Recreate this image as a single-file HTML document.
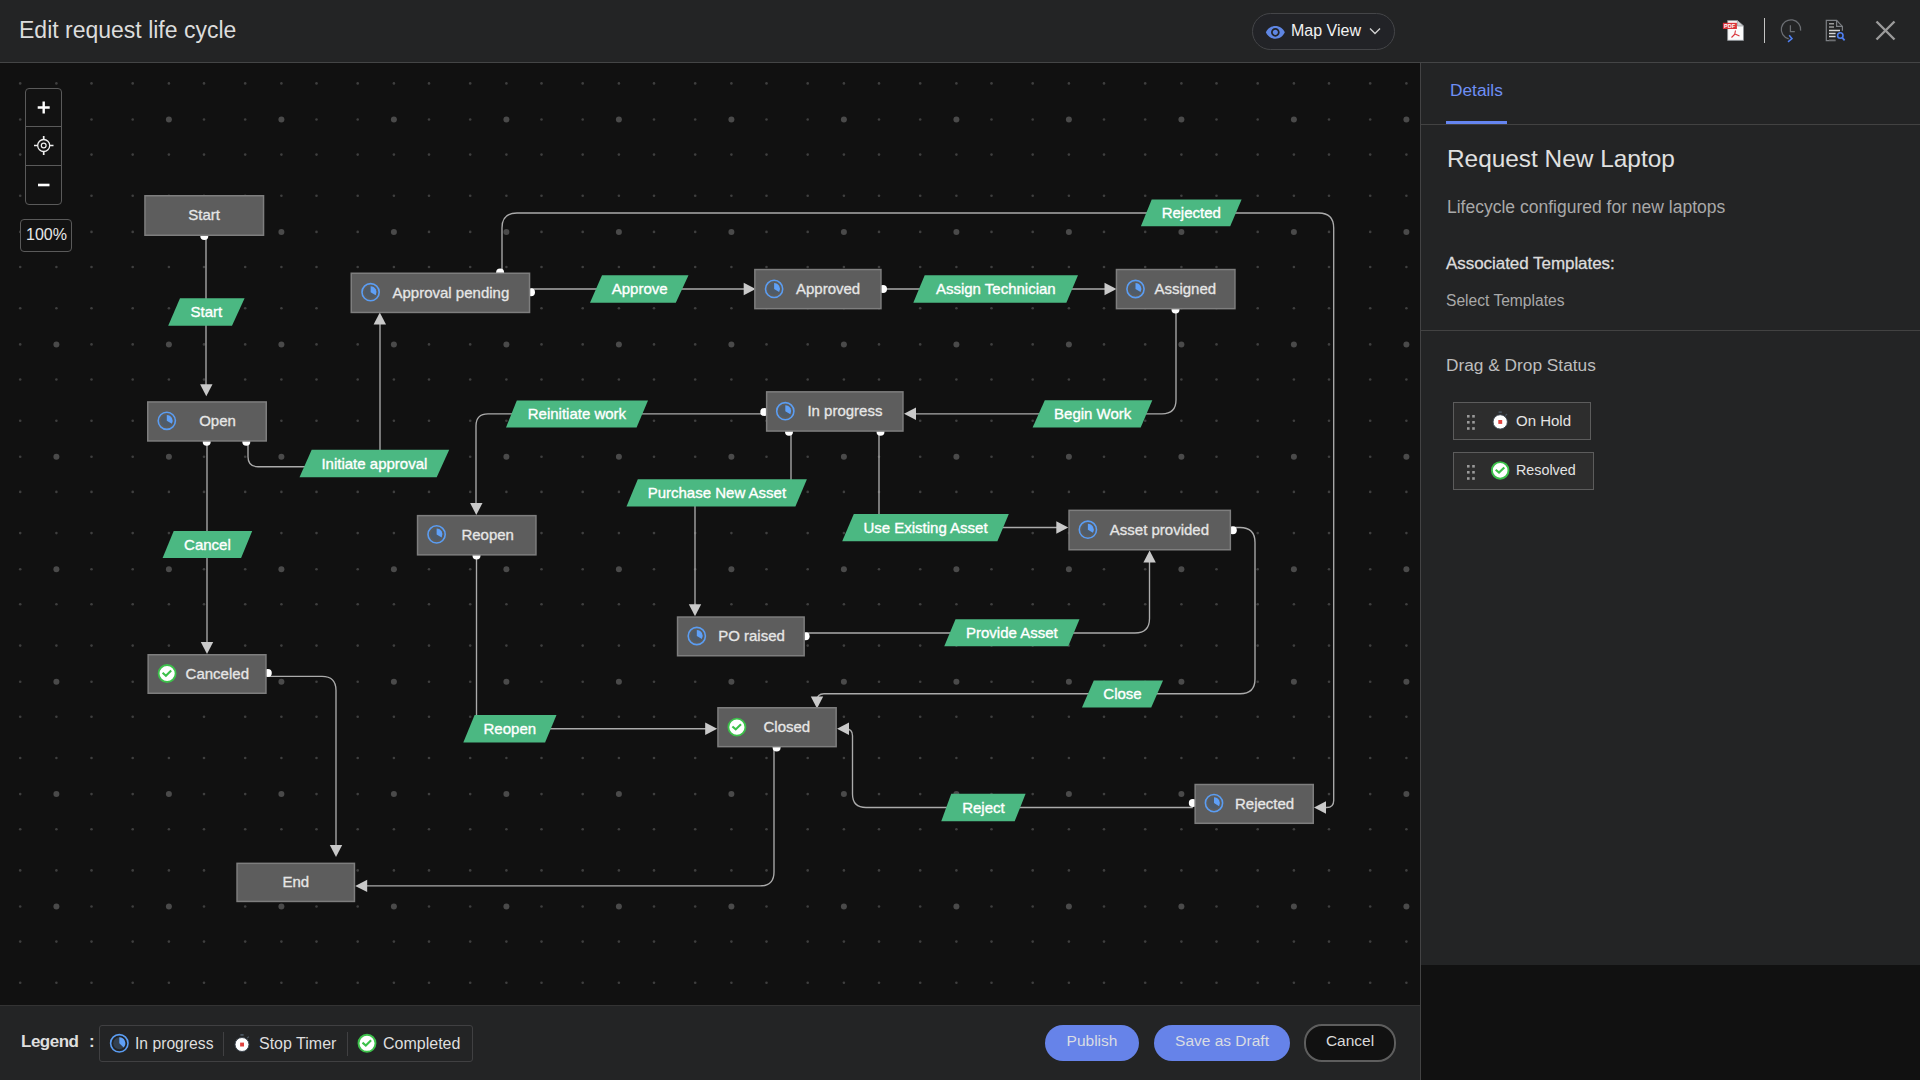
<!DOCTYPE html>
<html><head><meta charset="utf-8"><title>Edit request life cycle</title>
<style>
*{box-sizing:border-box}
html,body{margin:0;padding:0;width:1920px;height:1080px;overflow:hidden;background:#121212;font-family:"Liberation Sans",sans-serif}
.abs{position:absolute}
#hdr{left:0;top:0;width:1920px;height:63px;background:#232425;border-bottom:1px solid #444546}
#title{left:19px;top:15.2px;font-size:23px;color:#dcdcdc;line-height:30px;white-space:nowrap}
#mapview{left:1252px;top:13px;width:143px;height:37px;border:1px solid #444548;border-radius:19px;background:#222327}
#mvtext{left:1291px;top:21px;font-size:16px;color:#f2f2f2;line-height:20px;white-space:nowrap}
#canvas{left:0;top:63px;width:1420px;height:942px;background:#111111;overflow:hidden}
#panel{left:1420px;top:63px;width:500px;height:902px;background:#232425;border-left:1px solid #434344}
#below{left:1420px;top:965px;width:500px;height:115px;background:#111111;border-left:1px solid #434343}
#bottom{left:0;top:1005px;width:1420px;height:75px;background:#232425;border-top:1px solid #333333}
.t{position:absolute;white-space:nowrap;line-height:1}
.nt{font-family:"Liberation Sans",sans-serif;font-size:15px;fill:#e6e6e6;stroke:#e6e6e6;stroke-width:0.3px}
.lt{font-family:"Liberation Sans",sans-serif;font-size:15px;fill:#ffffff;stroke:#ffffff;stroke-width:0.35px}
.btn{position:absolute;border-radius:18px;height:36px;top:1025px;background:#6683e9;color:#d9dce3;font-size:15.5px;line-height:32.5px;text-align:center;white-space:nowrap}
</style></head>
<body>

<div id="hdr" class="abs"></div>
<div id="title" class="abs">Edit request life cycle</div>
<div id="mapview" class="abs"></div>
<svg class="abs" style="left:1265.1px;top:21.6px" width="20.7" height="20.7" viewBox="0 0 24 24">
 <path d="M12 4.5C7 4.5 2.73 7.61 1 12c1.73 4.39 6 7.5 11 7.5s9.27-3.11 11-7.5c-1.73-4.39-6-7.5-11-7.5zM12 17c-2.76 0-5-2.24-5-5s2.240-5 5-5 5 2.24 5 5-2.24 5-5 5zm0-8c-1.66 0-3 1.34-3 3s1.34 3 3 3 3-1.34 3-3-1.34-3-3-3z" fill="#5f86e3"/>
</svg>
<div id="mvtext" class="abs">Map View</div>
<svg class="abs" style="left:1368px;top:26px" width="14" height="10" viewBox="0 0 14 10"><path d="M2,2.5 L7,7.5 L12,2.5" fill="none" stroke="#d0d0d0" stroke-width="1.4"/></svg>
<svg class="abs" style="left:1718px;top:15px" width="32" height="30" viewBox="0 0 32 30">
 <path d="M9.6,5.6 H19.4 L25.5,11 V25.4 H9.6 Z" fill="#fafafa" stroke="#8a8d92" stroke-width="0.9"/>
 <path d="M19.4,5.6 V11 H25.5 Z" fill="#d0d2d4" stroke="#8a8d92" stroke-width="0.6"/>
 <rect x="4.9" y="7.8" width="14" height="6.2" fill="#d9343a"/>
 <text x="6" y="13" font-size="5.5" font-family="Liberation Sans" font-weight="bold" fill="#fff">PDF</text>
 <path d="M17.5,15.5 L16.5,20 M17,19 L13.5,22.5 M17,19 L21.5,21" stroke="#d9343a" stroke-width="1.1" fill="none"/>
</svg>
<div class="abs" style="left:1764px;top:18px;width:1px;height:25px;background:#c4c4c4"></div>
<svg class="abs" style="left:1760px;top:0px" width="100" height="60" viewBox="1760 0 100 60">
 <path d="M1800.6,30.6 A9.7,9.7 0 1 0 1788.7,38.9" fill="none" stroke="#6b6e73" stroke-width="1.25"/>
 <path d="M1790.4,25.3 V31.7 H1794.8" fill="none" stroke="#6b6e73" stroke-width="1.25"/>
 <path d="M1789.2,35.3 L1792,38.7 L1788,41.9" fill="none" stroke="#4f7ff0" stroke-width="1.5"/>
 <path d="M1835.6,40.6 H1826.3 V20.3 H1836.6 L1842.4,26.4 V30.8" fill="none" stroke="#7d8085" stroke-width="1.2"/>
 <path d="M1836.6,20.3 V26.3 H1842.4" fill="none" stroke="#7d8085" stroke-width="1.2"/>
 <path d="M1829,23.8 H1834 M1829,27.1 H1834" stroke="#9a9a9a" stroke-width="1.5"/>
 <path d="M1829,30.4 H1840 M1829,33.4 H1835.6 M1829,36.5 H1835.6" stroke="#d6d6d6" stroke-width="1.5"/>
 <path d="M1829,39.8 H1835.6" stroke="#555" stroke-width="1.2"/>
 <circle cx="1840.3" cy="35.5" r="2.7" fill="none" stroke="#4f7ff0" stroke-width="1.6"/>
 <path d="M1842.2,37.6 L1844.6,40.3" stroke="#4f7ff0" stroke-width="1.8"/>
</svg>
<svg class="abs" style="left:1872px;top:17px" width="28" height="28" viewBox="0 0 28 28"><path d="M4.5,4.5 L22.5,22.5 M22.5,4.5 L4.5,22.5" stroke="#9b9b9b" stroke-width="2.4"/></svg>


<div id="canvas" class="abs"></div>
<svg class="abs" style="left:0;top:0" width="1420" height="1005" viewBox="0 0 1420 1005">
<g clip-path="url(#cc)"><clipPath id="cc"><rect x="0" y="63" width="1420" height="942"/></clipPath>
<g fill="#3f3f3f"><circle cx="20.2" cy="83.4" r="1.3"/><circle cx="20.2" cy="119.5" r="1.3"/><circle cx="20.2" cy="154.6" r="1.3"/><circle cx="20.2" cy="195.8" r="1.3"/><circle cx="20.2" cy="231.9" r="1.3"/><circle cx="20.2" cy="267.0" r="1.3"/><circle cx="20.2" cy="308.3" r="1.3"/><circle cx="20.2" cy="344.4" r="1.3"/><circle cx="20.2" cy="379.5" r="1.3"/><circle cx="20.2" cy="420.7" r="1.3"/><circle cx="20.2" cy="456.8" r="1.3"/><circle cx="20.2" cy="491.9" r="1.3"/><circle cx="20.2" cy="533.1" r="1.3"/><circle cx="20.2" cy="569.2" r="1.3"/><circle cx="20.2" cy="604.3" r="1.3"/><circle cx="20.2" cy="645.6" r="1.3"/><circle cx="20.2" cy="681.7" r="1.3"/><circle cx="20.2" cy="716.8" r="1.3"/><circle cx="20.2" cy="758.0" r="1.3"/><circle cx="20.2" cy="794.1" r="1.3"/><circle cx="20.2" cy="829.2" r="1.3"/><circle cx="20.2" cy="870.4" r="1.3"/><circle cx="20.2" cy="906.5" r="1.3"/><circle cx="20.2" cy="941.6" r="1.3"/><circle cx="20.2" cy="982.8" r="1.3"/><circle cx="56.4" cy="83.4" r="1.3"/><circle cx="56.4" cy="154.6" r="1.3"/><circle cx="56.4" cy="195.8" r="1.3"/><circle cx="56.4" cy="267.0" r="1.3"/><circle cx="56.4" cy="308.3" r="1.3"/><circle cx="56.4" cy="379.5" r="1.3"/><circle cx="56.4" cy="420.7" r="1.3"/><circle cx="56.4" cy="491.9" r="1.3"/><circle cx="56.4" cy="533.1" r="1.3"/><circle cx="56.4" cy="604.3" r="1.3"/><circle cx="56.4" cy="645.6" r="1.3"/><circle cx="56.4" cy="716.8" r="1.3"/><circle cx="56.4" cy="758.0" r="1.3"/><circle cx="56.4" cy="829.2" r="1.3"/><circle cx="56.4" cy="870.4" r="1.3"/><circle cx="56.4" cy="941.6" r="1.3"/><circle cx="56.4" cy="982.8" r="1.3"/><circle cx="91.5" cy="83.4" r="1.3"/><circle cx="91.5" cy="119.5" r="1.3"/><circle cx="91.5" cy="154.6" r="1.3"/><circle cx="91.5" cy="195.8" r="1.3"/><circle cx="91.5" cy="231.9" r="1.3"/><circle cx="91.5" cy="267.0" r="1.3"/><circle cx="91.5" cy="308.3" r="1.3"/><circle cx="91.5" cy="344.4" r="1.3"/><circle cx="91.5" cy="379.5" r="1.3"/><circle cx="91.5" cy="420.7" r="1.3"/><circle cx="91.5" cy="456.8" r="1.3"/><circle cx="91.5" cy="491.9" r="1.3"/><circle cx="91.5" cy="533.1" r="1.3"/><circle cx="91.5" cy="569.2" r="1.3"/><circle cx="91.5" cy="604.3" r="1.3"/><circle cx="91.5" cy="645.6" r="1.3"/><circle cx="91.5" cy="681.7" r="1.3"/><circle cx="91.5" cy="716.8" r="1.3"/><circle cx="91.5" cy="758.0" r="1.3"/><circle cx="91.5" cy="794.1" r="1.3"/><circle cx="91.5" cy="829.2" r="1.3"/><circle cx="91.5" cy="870.4" r="1.3"/><circle cx="91.5" cy="906.5" r="1.3"/><circle cx="91.5" cy="941.6" r="1.3"/><circle cx="91.5" cy="982.8" r="1.3"/><circle cx="132.7" cy="83.4" r="1.3"/><circle cx="132.7" cy="119.5" r="1.3"/><circle cx="132.7" cy="154.6" r="1.3"/><circle cx="132.7" cy="195.8" r="1.3"/><circle cx="132.7" cy="231.9" r="1.3"/><circle cx="132.7" cy="267.0" r="1.3"/><circle cx="132.7" cy="308.3" r="1.3"/><circle cx="132.7" cy="344.4" r="1.3"/><circle cx="132.7" cy="379.5" r="1.3"/><circle cx="132.7" cy="420.7" r="1.3"/><circle cx="132.7" cy="456.8" r="1.3"/><circle cx="132.7" cy="491.9" r="1.3"/><circle cx="132.7" cy="533.1" r="1.3"/><circle cx="132.7" cy="569.2" r="1.3"/><circle cx="132.7" cy="604.3" r="1.3"/><circle cx="132.7" cy="645.6" r="1.3"/><circle cx="132.7" cy="681.7" r="1.3"/><circle cx="132.7" cy="716.8" r="1.3"/><circle cx="132.7" cy="758.0" r="1.3"/><circle cx="132.7" cy="794.1" r="1.3"/><circle cx="132.7" cy="829.2" r="1.3"/><circle cx="132.7" cy="870.4" r="1.3"/><circle cx="132.7" cy="906.5" r="1.3"/><circle cx="132.7" cy="941.6" r="1.3"/><circle cx="132.7" cy="982.8" r="1.3"/><circle cx="168.9" cy="83.4" r="1.3"/><circle cx="168.9" cy="154.6" r="1.3"/><circle cx="168.9" cy="195.8" r="1.3"/><circle cx="168.9" cy="267.0" r="1.3"/><circle cx="168.9" cy="308.3" r="1.3"/><circle cx="168.9" cy="379.5" r="1.3"/><circle cx="168.9" cy="420.7" r="1.3"/><circle cx="168.9" cy="491.9" r="1.3"/><circle cx="168.9" cy="533.1" r="1.3"/><circle cx="168.9" cy="604.3" r="1.3"/><circle cx="168.9" cy="645.6" r="1.3"/><circle cx="168.9" cy="716.8" r="1.3"/><circle cx="168.9" cy="758.0" r="1.3"/><circle cx="168.9" cy="829.2" r="1.3"/><circle cx="168.9" cy="870.4" r="1.3"/><circle cx="168.9" cy="941.6" r="1.3"/><circle cx="168.9" cy="982.8" r="1.3"/><circle cx="204.0" cy="83.4" r="1.3"/><circle cx="204.0" cy="119.5" r="1.3"/><circle cx="204.0" cy="154.6" r="1.3"/><circle cx="204.0" cy="195.8" r="1.3"/><circle cx="204.0" cy="231.9" r="1.3"/><circle cx="204.0" cy="267.0" r="1.3"/><circle cx="204.0" cy="308.3" r="1.3"/><circle cx="204.0" cy="344.4" r="1.3"/><circle cx="204.0" cy="379.5" r="1.3"/><circle cx="204.0" cy="420.7" r="1.3"/><circle cx="204.0" cy="456.8" r="1.3"/><circle cx="204.0" cy="491.9" r="1.3"/><circle cx="204.0" cy="533.1" r="1.3"/><circle cx="204.0" cy="569.2" r="1.3"/><circle cx="204.0" cy="604.3" r="1.3"/><circle cx="204.0" cy="645.6" r="1.3"/><circle cx="204.0" cy="681.7" r="1.3"/><circle cx="204.0" cy="716.8" r="1.3"/><circle cx="204.0" cy="758.0" r="1.3"/><circle cx="204.0" cy="794.1" r="1.3"/><circle cx="204.0" cy="829.2" r="1.3"/><circle cx="204.0" cy="870.4" r="1.3"/><circle cx="204.0" cy="906.5" r="1.3"/><circle cx="204.0" cy="941.6" r="1.3"/><circle cx="204.0" cy="982.8" r="1.3"/><circle cx="245.2" cy="83.4" r="1.3"/><circle cx="245.2" cy="119.5" r="1.3"/><circle cx="245.2" cy="154.6" r="1.3"/><circle cx="245.2" cy="195.8" r="1.3"/><circle cx="245.2" cy="231.9" r="1.3"/><circle cx="245.2" cy="267.0" r="1.3"/><circle cx="245.2" cy="308.3" r="1.3"/><circle cx="245.2" cy="344.4" r="1.3"/><circle cx="245.2" cy="379.5" r="1.3"/><circle cx="245.2" cy="420.7" r="1.3"/><circle cx="245.2" cy="456.8" r="1.3"/><circle cx="245.2" cy="491.9" r="1.3"/><circle cx="245.2" cy="533.1" r="1.3"/><circle cx="245.2" cy="569.2" r="1.3"/><circle cx="245.2" cy="604.3" r="1.3"/><circle cx="245.2" cy="645.6" r="1.3"/><circle cx="245.2" cy="681.7" r="1.3"/><circle cx="245.2" cy="716.8" r="1.3"/><circle cx="245.2" cy="758.0" r="1.3"/><circle cx="245.2" cy="794.1" r="1.3"/><circle cx="245.2" cy="829.2" r="1.3"/><circle cx="245.2" cy="870.4" r="1.3"/><circle cx="245.2" cy="906.5" r="1.3"/><circle cx="245.2" cy="941.6" r="1.3"/><circle cx="245.2" cy="982.8" r="1.3"/><circle cx="281.4" cy="83.4" r="1.3"/><circle cx="281.4" cy="154.6" r="1.3"/><circle cx="281.4" cy="195.8" r="1.3"/><circle cx="281.4" cy="267.0" r="1.3"/><circle cx="281.4" cy="308.3" r="1.3"/><circle cx="281.4" cy="379.5" r="1.3"/><circle cx="281.4" cy="420.7" r="1.3"/><circle cx="281.4" cy="491.9" r="1.3"/><circle cx="281.4" cy="533.1" r="1.3"/><circle cx="281.4" cy="604.3" r="1.3"/><circle cx="281.4" cy="645.6" r="1.3"/><circle cx="281.4" cy="716.8" r="1.3"/><circle cx="281.4" cy="758.0" r="1.3"/><circle cx="281.4" cy="829.2" r="1.3"/><circle cx="281.4" cy="870.4" r="1.3"/><circle cx="281.4" cy="941.6" r="1.3"/><circle cx="281.4" cy="982.8" r="1.3"/><circle cx="316.5" cy="83.4" r="1.3"/><circle cx="316.5" cy="119.5" r="1.3"/><circle cx="316.5" cy="154.6" r="1.3"/><circle cx="316.5" cy="195.8" r="1.3"/><circle cx="316.5" cy="231.9" r="1.3"/><circle cx="316.5" cy="267.0" r="1.3"/><circle cx="316.5" cy="308.3" r="1.3"/><circle cx="316.5" cy="344.4" r="1.3"/><circle cx="316.5" cy="379.5" r="1.3"/><circle cx="316.5" cy="420.7" r="1.3"/><circle cx="316.5" cy="456.8" r="1.3"/><circle cx="316.5" cy="491.9" r="1.3"/><circle cx="316.5" cy="533.1" r="1.3"/><circle cx="316.5" cy="569.2" r="1.3"/><circle cx="316.5" cy="604.3" r="1.3"/><circle cx="316.5" cy="645.6" r="1.3"/><circle cx="316.5" cy="681.7" r="1.3"/><circle cx="316.5" cy="716.8" r="1.3"/><circle cx="316.5" cy="758.0" r="1.3"/><circle cx="316.5" cy="794.1" r="1.3"/><circle cx="316.5" cy="829.2" r="1.3"/><circle cx="316.5" cy="870.4" r="1.3"/><circle cx="316.5" cy="906.5" r="1.3"/><circle cx="316.5" cy="941.6" r="1.3"/><circle cx="316.5" cy="982.8" r="1.3"/><circle cx="357.7" cy="83.4" r="1.3"/><circle cx="357.7" cy="119.5" r="1.3"/><circle cx="357.7" cy="154.6" r="1.3"/><circle cx="357.7" cy="195.8" r="1.3"/><circle cx="357.7" cy="231.9" r="1.3"/><circle cx="357.7" cy="267.0" r="1.3"/><circle cx="357.7" cy="308.3" r="1.3"/><circle cx="357.7" cy="344.4" r="1.3"/><circle cx="357.7" cy="379.5" r="1.3"/><circle cx="357.7" cy="420.7" r="1.3"/><circle cx="357.7" cy="456.8" r="1.3"/><circle cx="357.7" cy="491.9" r="1.3"/><circle cx="357.7" cy="533.1" r="1.3"/><circle cx="357.7" cy="569.2" r="1.3"/><circle cx="357.7" cy="604.3" r="1.3"/><circle cx="357.7" cy="645.6" r="1.3"/><circle cx="357.7" cy="681.7" r="1.3"/><circle cx="357.7" cy="716.8" r="1.3"/><circle cx="357.7" cy="758.0" r="1.3"/><circle cx="357.7" cy="794.1" r="1.3"/><circle cx="357.7" cy="829.2" r="1.3"/><circle cx="357.7" cy="870.4" r="1.3"/><circle cx="357.7" cy="906.5" r="1.3"/><circle cx="357.7" cy="941.6" r="1.3"/><circle cx="357.7" cy="982.8" r="1.3"/><circle cx="393.9" cy="83.4" r="1.3"/><circle cx="393.9" cy="154.6" r="1.3"/><circle cx="393.9" cy="195.8" r="1.3"/><circle cx="393.9" cy="267.0" r="1.3"/><circle cx="393.9" cy="308.3" r="1.3"/><circle cx="393.9" cy="379.5" r="1.3"/><circle cx="393.9" cy="420.7" r="1.3"/><circle cx="393.9" cy="491.9" r="1.3"/><circle cx="393.9" cy="533.1" r="1.3"/><circle cx="393.9" cy="604.3" r="1.3"/><circle cx="393.9" cy="645.6" r="1.3"/><circle cx="393.9" cy="716.8" r="1.3"/><circle cx="393.9" cy="758.0" r="1.3"/><circle cx="393.9" cy="829.2" r="1.3"/><circle cx="393.9" cy="870.4" r="1.3"/><circle cx="393.9" cy="941.6" r="1.3"/><circle cx="393.9" cy="982.8" r="1.3"/><circle cx="429.0" cy="83.4" r="1.3"/><circle cx="429.0" cy="119.5" r="1.3"/><circle cx="429.0" cy="154.6" r="1.3"/><circle cx="429.0" cy="195.8" r="1.3"/><circle cx="429.0" cy="231.9" r="1.3"/><circle cx="429.0" cy="267.0" r="1.3"/><circle cx="429.0" cy="308.3" r="1.3"/><circle cx="429.0" cy="344.4" r="1.3"/><circle cx="429.0" cy="379.5" r="1.3"/><circle cx="429.0" cy="420.7" r="1.3"/><circle cx="429.0" cy="456.8" r="1.3"/><circle cx="429.0" cy="491.9" r="1.3"/><circle cx="429.0" cy="533.1" r="1.3"/><circle cx="429.0" cy="569.2" r="1.3"/><circle cx="429.0" cy="604.3" r="1.3"/><circle cx="429.0" cy="645.6" r="1.3"/><circle cx="429.0" cy="681.7" r="1.3"/><circle cx="429.0" cy="716.8" r="1.3"/><circle cx="429.0" cy="758.0" r="1.3"/><circle cx="429.0" cy="794.1" r="1.3"/><circle cx="429.0" cy="829.2" r="1.3"/><circle cx="429.0" cy="870.4" r="1.3"/><circle cx="429.0" cy="906.5" r="1.3"/><circle cx="429.0" cy="941.6" r="1.3"/><circle cx="429.0" cy="982.8" r="1.3"/><circle cx="470.2" cy="83.4" r="1.3"/><circle cx="470.2" cy="119.5" r="1.3"/><circle cx="470.2" cy="154.6" r="1.3"/><circle cx="470.2" cy="195.8" r="1.3"/><circle cx="470.2" cy="231.9" r="1.3"/><circle cx="470.2" cy="267.0" r="1.3"/><circle cx="470.2" cy="308.3" r="1.3"/><circle cx="470.2" cy="344.4" r="1.3"/><circle cx="470.2" cy="379.5" r="1.3"/><circle cx="470.2" cy="420.7" r="1.3"/><circle cx="470.2" cy="456.8" r="1.3"/><circle cx="470.2" cy="491.9" r="1.3"/><circle cx="470.2" cy="533.1" r="1.3"/><circle cx="470.2" cy="569.2" r="1.3"/><circle cx="470.2" cy="604.3" r="1.3"/><circle cx="470.2" cy="645.6" r="1.3"/><circle cx="470.2" cy="681.7" r="1.3"/><circle cx="470.2" cy="716.8" r="1.3"/><circle cx="470.2" cy="758.0" r="1.3"/><circle cx="470.2" cy="794.1" r="1.3"/><circle cx="470.2" cy="829.2" r="1.3"/><circle cx="470.2" cy="870.4" r="1.3"/><circle cx="470.2" cy="906.5" r="1.3"/><circle cx="470.2" cy="941.6" r="1.3"/><circle cx="470.2" cy="982.8" r="1.3"/><circle cx="506.4" cy="83.4" r="1.3"/><circle cx="506.4" cy="154.6" r="1.3"/><circle cx="506.4" cy="195.8" r="1.3"/><circle cx="506.4" cy="267.0" r="1.3"/><circle cx="506.4" cy="308.3" r="1.3"/><circle cx="506.4" cy="379.5" r="1.3"/><circle cx="506.4" cy="420.7" r="1.3"/><circle cx="506.4" cy="491.9" r="1.3"/><circle cx="506.4" cy="533.1" r="1.3"/><circle cx="506.4" cy="604.3" r="1.3"/><circle cx="506.4" cy="645.6" r="1.3"/><circle cx="506.4" cy="716.8" r="1.3"/><circle cx="506.4" cy="758.0" r="1.3"/><circle cx="506.4" cy="829.2" r="1.3"/><circle cx="506.4" cy="870.4" r="1.3"/><circle cx="506.4" cy="941.6" r="1.3"/><circle cx="506.4" cy="982.8" r="1.3"/><circle cx="541.5" cy="83.4" r="1.3"/><circle cx="541.5" cy="119.5" r="1.3"/><circle cx="541.5" cy="154.6" r="1.3"/><circle cx="541.5" cy="195.8" r="1.3"/><circle cx="541.5" cy="231.9" r="1.3"/><circle cx="541.5" cy="267.0" r="1.3"/><circle cx="541.5" cy="308.3" r="1.3"/><circle cx="541.5" cy="344.4" r="1.3"/><circle cx="541.5" cy="379.5" r="1.3"/><circle cx="541.5" cy="420.7" r="1.3"/><circle cx="541.5" cy="456.8" r="1.3"/><circle cx="541.5" cy="491.9" r="1.3"/><circle cx="541.5" cy="533.1" r="1.3"/><circle cx="541.5" cy="569.2" r="1.3"/><circle cx="541.5" cy="604.3" r="1.3"/><circle cx="541.5" cy="645.6" r="1.3"/><circle cx="541.5" cy="681.7" r="1.3"/><circle cx="541.5" cy="716.8" r="1.3"/><circle cx="541.5" cy="758.0" r="1.3"/><circle cx="541.5" cy="794.1" r="1.3"/><circle cx="541.5" cy="829.2" r="1.3"/><circle cx="541.5" cy="870.4" r="1.3"/><circle cx="541.5" cy="906.5" r="1.3"/><circle cx="541.5" cy="941.6" r="1.3"/><circle cx="541.5" cy="982.8" r="1.3"/><circle cx="582.7" cy="83.4" r="1.3"/><circle cx="582.7" cy="119.5" r="1.3"/><circle cx="582.7" cy="154.6" r="1.3"/><circle cx="582.7" cy="195.8" r="1.3"/><circle cx="582.7" cy="231.9" r="1.3"/><circle cx="582.7" cy="267.0" r="1.3"/><circle cx="582.7" cy="308.3" r="1.3"/><circle cx="582.7" cy="344.4" r="1.3"/><circle cx="582.7" cy="379.5" r="1.3"/><circle cx="582.7" cy="420.7" r="1.3"/><circle cx="582.7" cy="456.8" r="1.3"/><circle cx="582.7" cy="491.9" r="1.3"/><circle cx="582.7" cy="533.1" r="1.3"/><circle cx="582.7" cy="569.2" r="1.3"/><circle cx="582.7" cy="604.3" r="1.3"/><circle cx="582.7" cy="645.6" r="1.3"/><circle cx="582.7" cy="681.7" r="1.3"/><circle cx="582.7" cy="716.8" r="1.3"/><circle cx="582.7" cy="758.0" r="1.3"/><circle cx="582.7" cy="794.1" r="1.3"/><circle cx="582.7" cy="829.2" r="1.3"/><circle cx="582.7" cy="870.4" r="1.3"/><circle cx="582.7" cy="906.5" r="1.3"/><circle cx="582.7" cy="941.6" r="1.3"/><circle cx="582.7" cy="982.8" r="1.3"/><circle cx="618.9" cy="83.4" r="1.3"/><circle cx="618.9" cy="154.6" r="1.3"/><circle cx="618.9" cy="195.8" r="1.3"/><circle cx="618.9" cy="267.0" r="1.3"/><circle cx="618.9" cy="308.3" r="1.3"/><circle cx="618.9" cy="379.5" r="1.3"/><circle cx="618.9" cy="420.7" r="1.3"/><circle cx="618.9" cy="491.9" r="1.3"/><circle cx="618.9" cy="533.1" r="1.3"/><circle cx="618.9" cy="604.3" r="1.3"/><circle cx="618.9" cy="645.6" r="1.3"/><circle cx="618.9" cy="716.8" r="1.3"/><circle cx="618.9" cy="758.0" r="1.3"/><circle cx="618.9" cy="829.2" r="1.3"/><circle cx="618.9" cy="870.4" r="1.3"/><circle cx="618.9" cy="941.6" r="1.3"/><circle cx="618.9" cy="982.8" r="1.3"/><circle cx="654.0" cy="83.4" r="1.3"/><circle cx="654.0" cy="119.5" r="1.3"/><circle cx="654.0" cy="154.6" r="1.3"/><circle cx="654.0" cy="195.8" r="1.3"/><circle cx="654.0" cy="231.9" r="1.3"/><circle cx="654.0" cy="267.0" r="1.3"/><circle cx="654.0" cy="308.3" r="1.3"/><circle cx="654.0" cy="344.4" r="1.3"/><circle cx="654.0" cy="379.5" r="1.3"/><circle cx="654.0" cy="420.7" r="1.3"/><circle cx="654.0" cy="456.8" r="1.3"/><circle cx="654.0" cy="491.9" r="1.3"/><circle cx="654.0" cy="533.1" r="1.3"/><circle cx="654.0" cy="569.2" r="1.3"/><circle cx="654.0" cy="604.3" r="1.3"/><circle cx="654.0" cy="645.6" r="1.3"/><circle cx="654.0" cy="681.7" r="1.3"/><circle cx="654.0" cy="716.8" r="1.3"/><circle cx="654.0" cy="758.0" r="1.3"/><circle cx="654.0" cy="794.1" r="1.3"/><circle cx="654.0" cy="829.2" r="1.3"/><circle cx="654.0" cy="870.4" r="1.3"/><circle cx="654.0" cy="906.5" r="1.3"/><circle cx="654.0" cy="941.6" r="1.3"/><circle cx="654.0" cy="982.8" r="1.3"/><circle cx="695.2" cy="83.4" r="1.3"/><circle cx="695.2" cy="119.5" r="1.3"/><circle cx="695.2" cy="154.6" r="1.3"/><circle cx="695.2" cy="195.8" r="1.3"/><circle cx="695.2" cy="231.9" r="1.3"/><circle cx="695.2" cy="267.0" r="1.3"/><circle cx="695.2" cy="308.3" r="1.3"/><circle cx="695.2" cy="344.4" r="1.3"/><circle cx="695.2" cy="379.5" r="1.3"/><circle cx="695.2" cy="420.7" r="1.3"/><circle cx="695.2" cy="456.8" r="1.3"/><circle cx="695.2" cy="491.9" r="1.3"/><circle cx="695.2" cy="533.1" r="1.3"/><circle cx="695.2" cy="569.2" r="1.3"/><circle cx="695.2" cy="604.3" r="1.3"/><circle cx="695.2" cy="645.6" r="1.3"/><circle cx="695.2" cy="681.7" r="1.3"/><circle cx="695.2" cy="716.8" r="1.3"/><circle cx="695.2" cy="758.0" r="1.3"/><circle cx="695.2" cy="794.1" r="1.3"/><circle cx="695.2" cy="829.2" r="1.3"/><circle cx="695.2" cy="870.4" r="1.3"/><circle cx="695.2" cy="906.5" r="1.3"/><circle cx="695.2" cy="941.6" r="1.3"/><circle cx="695.2" cy="982.8" r="1.3"/><circle cx="731.4" cy="83.4" r="1.3"/><circle cx="731.4" cy="154.6" r="1.3"/><circle cx="731.4" cy="195.8" r="1.3"/><circle cx="731.4" cy="267.0" r="1.3"/><circle cx="731.4" cy="308.3" r="1.3"/><circle cx="731.4" cy="379.5" r="1.3"/><circle cx="731.4" cy="420.7" r="1.3"/><circle cx="731.4" cy="491.9" r="1.3"/><circle cx="731.4" cy="533.1" r="1.3"/><circle cx="731.4" cy="604.3" r="1.3"/><circle cx="731.4" cy="645.6" r="1.3"/><circle cx="731.4" cy="716.8" r="1.3"/><circle cx="731.4" cy="758.0" r="1.3"/><circle cx="731.4" cy="829.2" r="1.3"/><circle cx="731.4" cy="870.4" r="1.3"/><circle cx="731.4" cy="941.6" r="1.3"/><circle cx="731.4" cy="982.8" r="1.3"/><circle cx="766.5" cy="83.4" r="1.3"/><circle cx="766.5" cy="119.5" r="1.3"/><circle cx="766.5" cy="154.6" r="1.3"/><circle cx="766.5" cy="195.8" r="1.3"/><circle cx="766.5" cy="231.9" r="1.3"/><circle cx="766.5" cy="267.0" r="1.3"/><circle cx="766.5" cy="308.3" r="1.3"/><circle cx="766.5" cy="344.4" r="1.3"/><circle cx="766.5" cy="379.5" r="1.3"/><circle cx="766.5" cy="420.7" r="1.3"/><circle cx="766.5" cy="456.8" r="1.3"/><circle cx="766.5" cy="491.9" r="1.3"/><circle cx="766.5" cy="533.1" r="1.3"/><circle cx="766.5" cy="569.2" r="1.3"/><circle cx="766.5" cy="604.3" r="1.3"/><circle cx="766.5" cy="645.6" r="1.3"/><circle cx="766.5" cy="681.7" r="1.3"/><circle cx="766.5" cy="716.8" r="1.3"/><circle cx="766.5" cy="758.0" r="1.3"/><circle cx="766.5" cy="794.1" r="1.3"/><circle cx="766.5" cy="829.2" r="1.3"/><circle cx="766.5" cy="870.4" r="1.3"/><circle cx="766.5" cy="906.5" r="1.3"/><circle cx="766.5" cy="941.6" r="1.3"/><circle cx="766.5" cy="982.8" r="1.3"/><circle cx="807.7" cy="83.4" r="1.3"/><circle cx="807.7" cy="119.5" r="1.3"/><circle cx="807.7" cy="154.6" r="1.3"/><circle cx="807.7" cy="195.8" r="1.3"/><circle cx="807.7" cy="231.9" r="1.3"/><circle cx="807.7" cy="267.0" r="1.3"/><circle cx="807.7" cy="308.3" r="1.3"/><circle cx="807.7" cy="344.4" r="1.3"/><circle cx="807.7" cy="379.5" r="1.3"/><circle cx="807.7" cy="420.7" r="1.3"/><circle cx="807.7" cy="456.8" r="1.3"/><circle cx="807.7" cy="491.9" r="1.3"/><circle cx="807.7" cy="533.1" r="1.3"/><circle cx="807.7" cy="569.2" r="1.3"/><circle cx="807.7" cy="604.3" r="1.3"/><circle cx="807.7" cy="645.6" r="1.3"/><circle cx="807.7" cy="681.7" r="1.3"/><circle cx="807.7" cy="716.8" r="1.3"/><circle cx="807.7" cy="758.0" r="1.3"/><circle cx="807.7" cy="794.1" r="1.3"/><circle cx="807.7" cy="829.2" r="1.3"/><circle cx="807.7" cy="870.4" r="1.3"/><circle cx="807.7" cy="906.5" r="1.3"/><circle cx="807.7" cy="941.6" r="1.3"/><circle cx="807.7" cy="982.8" r="1.3"/><circle cx="843.9" cy="83.4" r="1.3"/><circle cx="843.9" cy="154.6" r="1.3"/><circle cx="843.9" cy="195.8" r="1.3"/><circle cx="843.9" cy="267.0" r="1.3"/><circle cx="843.9" cy="308.3" r="1.3"/><circle cx="843.9" cy="379.5" r="1.3"/><circle cx="843.9" cy="420.7" r="1.3"/><circle cx="843.9" cy="491.9" r="1.3"/><circle cx="843.9" cy="533.1" r="1.3"/><circle cx="843.9" cy="604.3" r="1.3"/><circle cx="843.9" cy="645.6" r="1.3"/><circle cx="843.9" cy="716.8" r="1.3"/><circle cx="843.9" cy="758.0" r="1.3"/><circle cx="843.9" cy="829.2" r="1.3"/><circle cx="843.9" cy="870.4" r="1.3"/><circle cx="843.9" cy="941.6" r="1.3"/><circle cx="843.9" cy="982.8" r="1.3"/><circle cx="879.0" cy="83.4" r="1.3"/><circle cx="879.0" cy="119.5" r="1.3"/><circle cx="879.0" cy="154.6" r="1.3"/><circle cx="879.0" cy="195.8" r="1.3"/><circle cx="879.0" cy="231.9" r="1.3"/><circle cx="879.0" cy="267.0" r="1.3"/><circle cx="879.0" cy="308.3" r="1.3"/><circle cx="879.0" cy="344.4" r="1.3"/><circle cx="879.0" cy="379.5" r="1.3"/><circle cx="879.0" cy="420.7" r="1.3"/><circle cx="879.0" cy="456.8" r="1.3"/><circle cx="879.0" cy="491.9" r="1.3"/><circle cx="879.0" cy="533.1" r="1.3"/><circle cx="879.0" cy="569.2" r="1.3"/><circle cx="879.0" cy="604.3" r="1.3"/><circle cx="879.0" cy="645.6" r="1.3"/><circle cx="879.0" cy="681.7" r="1.3"/><circle cx="879.0" cy="716.8" r="1.3"/><circle cx="879.0" cy="758.0" r="1.3"/><circle cx="879.0" cy="794.1" r="1.3"/><circle cx="879.0" cy="829.2" r="1.3"/><circle cx="879.0" cy="870.4" r="1.3"/><circle cx="879.0" cy="906.5" r="1.3"/><circle cx="879.0" cy="941.6" r="1.3"/><circle cx="879.0" cy="982.8" r="1.3"/><circle cx="920.2" cy="83.4" r="1.3"/><circle cx="920.2" cy="119.5" r="1.3"/><circle cx="920.2" cy="154.6" r="1.3"/><circle cx="920.2" cy="195.8" r="1.3"/><circle cx="920.2" cy="231.9" r="1.3"/><circle cx="920.2" cy="267.0" r="1.3"/><circle cx="920.2" cy="308.3" r="1.3"/><circle cx="920.2" cy="344.4" r="1.3"/><circle cx="920.2" cy="379.5" r="1.3"/><circle cx="920.2" cy="420.7" r="1.3"/><circle cx="920.2" cy="456.8" r="1.3"/><circle cx="920.2" cy="491.9" r="1.3"/><circle cx="920.2" cy="533.1" r="1.3"/><circle cx="920.2" cy="569.2" r="1.3"/><circle cx="920.2" cy="604.3" r="1.3"/><circle cx="920.2" cy="645.6" r="1.3"/><circle cx="920.2" cy="681.7" r="1.3"/><circle cx="920.2" cy="716.8" r="1.3"/><circle cx="920.2" cy="758.0" r="1.3"/><circle cx="920.2" cy="794.1" r="1.3"/><circle cx="920.2" cy="829.2" r="1.3"/><circle cx="920.2" cy="870.4" r="1.3"/><circle cx="920.2" cy="906.5" r="1.3"/><circle cx="920.2" cy="941.6" r="1.3"/><circle cx="920.2" cy="982.8" r="1.3"/><circle cx="956.4" cy="83.4" r="1.3"/><circle cx="956.4" cy="154.6" r="1.3"/><circle cx="956.4" cy="195.8" r="1.3"/><circle cx="956.4" cy="267.0" r="1.3"/><circle cx="956.4" cy="308.3" r="1.3"/><circle cx="956.4" cy="379.5" r="1.3"/><circle cx="956.4" cy="420.7" r="1.3"/><circle cx="956.4" cy="491.9" r="1.3"/><circle cx="956.4" cy="533.1" r="1.3"/><circle cx="956.4" cy="604.3" r="1.3"/><circle cx="956.4" cy="645.6" r="1.3"/><circle cx="956.4" cy="716.8" r="1.3"/><circle cx="956.4" cy="758.0" r="1.3"/><circle cx="956.4" cy="829.2" r="1.3"/><circle cx="956.4" cy="870.4" r="1.3"/><circle cx="956.4" cy="941.6" r="1.3"/><circle cx="956.4" cy="982.8" r="1.3"/><circle cx="991.5" cy="83.4" r="1.3"/><circle cx="991.5" cy="119.5" r="1.3"/><circle cx="991.5" cy="154.6" r="1.3"/><circle cx="991.5" cy="195.8" r="1.3"/><circle cx="991.5" cy="231.9" r="1.3"/><circle cx="991.5" cy="267.0" r="1.3"/><circle cx="991.5" cy="308.3" r="1.3"/><circle cx="991.5" cy="344.4" r="1.3"/><circle cx="991.5" cy="379.5" r="1.3"/><circle cx="991.5" cy="420.7" r="1.3"/><circle cx="991.5" cy="456.8" r="1.3"/><circle cx="991.5" cy="491.9" r="1.3"/><circle cx="991.5" cy="533.1" r="1.3"/><circle cx="991.5" cy="569.2" r="1.3"/><circle cx="991.5" cy="604.3" r="1.3"/><circle cx="991.5" cy="645.6" r="1.3"/><circle cx="991.5" cy="681.7" r="1.3"/><circle cx="991.5" cy="716.8" r="1.3"/><circle cx="991.5" cy="758.0" r="1.3"/><circle cx="991.5" cy="794.1" r="1.3"/><circle cx="991.5" cy="829.2" r="1.3"/><circle cx="991.5" cy="870.4" r="1.3"/><circle cx="991.5" cy="906.5" r="1.3"/><circle cx="991.5" cy="941.6" r="1.3"/><circle cx="991.5" cy="982.8" r="1.3"/><circle cx="1032.7" cy="83.4" r="1.3"/><circle cx="1032.7" cy="119.5" r="1.3"/><circle cx="1032.7" cy="154.6" r="1.3"/><circle cx="1032.7" cy="195.8" r="1.3"/><circle cx="1032.7" cy="231.9" r="1.3"/><circle cx="1032.7" cy="267.0" r="1.3"/><circle cx="1032.7" cy="308.3" r="1.3"/><circle cx="1032.7" cy="344.4" r="1.3"/><circle cx="1032.7" cy="379.5" r="1.3"/><circle cx="1032.7" cy="420.7" r="1.3"/><circle cx="1032.7" cy="456.8" r="1.3"/><circle cx="1032.7" cy="491.9" r="1.3"/><circle cx="1032.7" cy="533.1" r="1.3"/><circle cx="1032.7" cy="569.2" r="1.3"/><circle cx="1032.7" cy="604.3" r="1.3"/><circle cx="1032.7" cy="645.6" r="1.3"/><circle cx="1032.7" cy="681.7" r="1.3"/><circle cx="1032.7" cy="716.8" r="1.3"/><circle cx="1032.7" cy="758.0" r="1.3"/><circle cx="1032.7" cy="794.1" r="1.3"/><circle cx="1032.7" cy="829.2" r="1.3"/><circle cx="1032.7" cy="870.4" r="1.3"/><circle cx="1032.7" cy="906.5" r="1.3"/><circle cx="1032.7" cy="941.6" r="1.3"/><circle cx="1032.7" cy="982.8" r="1.3"/><circle cx="1068.9" cy="83.4" r="1.3"/><circle cx="1068.9" cy="154.6" r="1.3"/><circle cx="1068.9" cy="195.8" r="1.3"/><circle cx="1068.9" cy="267.0" r="1.3"/><circle cx="1068.9" cy="308.3" r="1.3"/><circle cx="1068.9" cy="379.5" r="1.3"/><circle cx="1068.9" cy="420.7" r="1.3"/><circle cx="1068.9" cy="491.9" r="1.3"/><circle cx="1068.9" cy="533.1" r="1.3"/><circle cx="1068.9" cy="604.3" r="1.3"/><circle cx="1068.9" cy="645.6" r="1.3"/><circle cx="1068.9" cy="716.8" r="1.3"/><circle cx="1068.9" cy="758.0" r="1.3"/><circle cx="1068.9" cy="829.2" r="1.3"/><circle cx="1068.9" cy="870.4" r="1.3"/><circle cx="1068.9" cy="941.6" r="1.3"/><circle cx="1068.9" cy="982.8" r="1.3"/><circle cx="1104.0" cy="83.4" r="1.3"/><circle cx="1104.0" cy="119.5" r="1.3"/><circle cx="1104.0" cy="154.6" r="1.3"/><circle cx="1104.0" cy="195.8" r="1.3"/><circle cx="1104.0" cy="231.9" r="1.3"/><circle cx="1104.0" cy="267.0" r="1.3"/><circle cx="1104.0" cy="308.3" r="1.3"/><circle cx="1104.0" cy="344.4" r="1.3"/><circle cx="1104.0" cy="379.5" r="1.3"/><circle cx="1104.0" cy="420.7" r="1.3"/><circle cx="1104.0" cy="456.8" r="1.3"/><circle cx="1104.0" cy="491.9" r="1.3"/><circle cx="1104.0" cy="533.1" r="1.3"/><circle cx="1104.0" cy="569.2" r="1.3"/><circle cx="1104.0" cy="604.3" r="1.3"/><circle cx="1104.0" cy="645.6" r="1.3"/><circle cx="1104.0" cy="681.7" r="1.3"/><circle cx="1104.0" cy="716.8" r="1.3"/><circle cx="1104.0" cy="758.0" r="1.3"/><circle cx="1104.0" cy="794.1" r="1.3"/><circle cx="1104.0" cy="829.2" r="1.3"/><circle cx="1104.0" cy="870.4" r="1.3"/><circle cx="1104.0" cy="906.5" r="1.3"/><circle cx="1104.0" cy="941.6" r="1.3"/><circle cx="1104.0" cy="982.8" r="1.3"/><circle cx="1145.2" cy="83.4" r="1.3"/><circle cx="1145.2" cy="119.5" r="1.3"/><circle cx="1145.2" cy="154.6" r="1.3"/><circle cx="1145.2" cy="195.8" r="1.3"/><circle cx="1145.2" cy="231.9" r="1.3"/><circle cx="1145.2" cy="267.0" r="1.3"/><circle cx="1145.2" cy="308.3" r="1.3"/><circle cx="1145.2" cy="344.4" r="1.3"/><circle cx="1145.2" cy="379.5" r="1.3"/><circle cx="1145.2" cy="420.7" r="1.3"/><circle cx="1145.2" cy="456.8" r="1.3"/><circle cx="1145.2" cy="491.9" r="1.3"/><circle cx="1145.2" cy="533.1" r="1.3"/><circle cx="1145.2" cy="569.2" r="1.3"/><circle cx="1145.2" cy="604.3" r="1.3"/><circle cx="1145.2" cy="645.6" r="1.3"/><circle cx="1145.2" cy="681.7" r="1.3"/><circle cx="1145.2" cy="716.8" r="1.3"/><circle cx="1145.2" cy="758.0" r="1.3"/><circle cx="1145.2" cy="794.1" r="1.3"/><circle cx="1145.2" cy="829.2" r="1.3"/><circle cx="1145.2" cy="870.4" r="1.3"/><circle cx="1145.2" cy="906.5" r="1.3"/><circle cx="1145.2" cy="941.6" r="1.3"/><circle cx="1145.2" cy="982.8" r="1.3"/><circle cx="1181.4" cy="83.4" r="1.3"/><circle cx="1181.4" cy="154.6" r="1.3"/><circle cx="1181.4" cy="195.8" r="1.3"/><circle cx="1181.4" cy="267.0" r="1.3"/><circle cx="1181.4" cy="308.3" r="1.3"/><circle cx="1181.4" cy="379.5" r="1.3"/><circle cx="1181.4" cy="420.7" r="1.3"/><circle cx="1181.4" cy="491.9" r="1.3"/><circle cx="1181.4" cy="533.1" r="1.3"/><circle cx="1181.4" cy="604.3" r="1.3"/><circle cx="1181.4" cy="645.6" r="1.3"/><circle cx="1181.4" cy="716.8" r="1.3"/><circle cx="1181.4" cy="758.0" r="1.3"/><circle cx="1181.4" cy="829.2" r="1.3"/><circle cx="1181.4" cy="870.4" r="1.3"/><circle cx="1181.4" cy="941.6" r="1.3"/><circle cx="1181.4" cy="982.8" r="1.3"/><circle cx="1216.5" cy="83.4" r="1.3"/><circle cx="1216.5" cy="119.5" r="1.3"/><circle cx="1216.5" cy="154.6" r="1.3"/><circle cx="1216.5" cy="195.8" r="1.3"/><circle cx="1216.5" cy="231.9" r="1.3"/><circle cx="1216.5" cy="267.0" r="1.3"/><circle cx="1216.5" cy="308.3" r="1.3"/><circle cx="1216.5" cy="344.4" r="1.3"/><circle cx="1216.5" cy="379.5" r="1.3"/><circle cx="1216.5" cy="420.7" r="1.3"/><circle cx="1216.5" cy="456.8" r="1.3"/><circle cx="1216.5" cy="491.9" r="1.3"/><circle cx="1216.5" cy="533.1" r="1.3"/><circle cx="1216.5" cy="569.2" r="1.3"/><circle cx="1216.5" cy="604.3" r="1.3"/><circle cx="1216.5" cy="645.6" r="1.3"/><circle cx="1216.5" cy="681.7" r="1.3"/><circle cx="1216.5" cy="716.8" r="1.3"/><circle cx="1216.5" cy="758.0" r="1.3"/><circle cx="1216.5" cy="794.1" r="1.3"/><circle cx="1216.5" cy="829.2" r="1.3"/><circle cx="1216.5" cy="870.4" r="1.3"/><circle cx="1216.5" cy="906.5" r="1.3"/><circle cx="1216.5" cy="941.6" r="1.3"/><circle cx="1216.5" cy="982.8" r="1.3"/><circle cx="1257.7" cy="83.4" r="1.3"/><circle cx="1257.7" cy="119.5" r="1.3"/><circle cx="1257.7" cy="154.6" r="1.3"/><circle cx="1257.7" cy="195.8" r="1.3"/><circle cx="1257.7" cy="231.9" r="1.3"/><circle cx="1257.7" cy="267.0" r="1.3"/><circle cx="1257.7" cy="308.3" r="1.3"/><circle cx="1257.7" cy="344.4" r="1.3"/><circle cx="1257.7" cy="379.5" r="1.3"/><circle cx="1257.7" cy="420.7" r="1.3"/><circle cx="1257.7" cy="456.8" r="1.3"/><circle cx="1257.7" cy="491.9" r="1.3"/><circle cx="1257.7" cy="533.1" r="1.3"/><circle cx="1257.7" cy="569.2" r="1.3"/><circle cx="1257.7" cy="604.3" r="1.3"/><circle cx="1257.7" cy="645.6" r="1.3"/><circle cx="1257.7" cy="681.7" r="1.3"/><circle cx="1257.7" cy="716.8" r="1.3"/><circle cx="1257.7" cy="758.0" r="1.3"/><circle cx="1257.7" cy="794.1" r="1.3"/><circle cx="1257.7" cy="829.2" r="1.3"/><circle cx="1257.7" cy="870.4" r="1.3"/><circle cx="1257.7" cy="906.5" r="1.3"/><circle cx="1257.7" cy="941.6" r="1.3"/><circle cx="1257.7" cy="982.8" r="1.3"/><circle cx="1293.9" cy="83.4" r="1.3"/><circle cx="1293.9" cy="154.6" r="1.3"/><circle cx="1293.9" cy="195.8" r="1.3"/><circle cx="1293.9" cy="267.0" r="1.3"/><circle cx="1293.9" cy="308.3" r="1.3"/><circle cx="1293.9" cy="379.5" r="1.3"/><circle cx="1293.9" cy="420.7" r="1.3"/><circle cx="1293.9" cy="491.9" r="1.3"/><circle cx="1293.9" cy="533.1" r="1.3"/><circle cx="1293.9" cy="604.3" r="1.3"/><circle cx="1293.9" cy="645.6" r="1.3"/><circle cx="1293.9" cy="716.8" r="1.3"/><circle cx="1293.9" cy="758.0" r="1.3"/><circle cx="1293.9" cy="829.2" r="1.3"/><circle cx="1293.9" cy="870.4" r="1.3"/><circle cx="1293.9" cy="941.6" r="1.3"/><circle cx="1293.9" cy="982.8" r="1.3"/><circle cx="1329.0" cy="83.4" r="1.3"/><circle cx="1329.0" cy="119.5" r="1.3"/><circle cx="1329.0" cy="154.6" r="1.3"/><circle cx="1329.0" cy="195.8" r="1.3"/><circle cx="1329.0" cy="231.9" r="1.3"/><circle cx="1329.0" cy="267.0" r="1.3"/><circle cx="1329.0" cy="308.3" r="1.3"/><circle cx="1329.0" cy="344.4" r="1.3"/><circle cx="1329.0" cy="379.5" r="1.3"/><circle cx="1329.0" cy="420.7" r="1.3"/><circle cx="1329.0" cy="456.8" r="1.3"/><circle cx="1329.0" cy="491.9" r="1.3"/><circle cx="1329.0" cy="533.1" r="1.3"/><circle cx="1329.0" cy="569.2" r="1.3"/><circle cx="1329.0" cy="604.3" r="1.3"/><circle cx="1329.0" cy="645.6" r="1.3"/><circle cx="1329.0" cy="681.7" r="1.3"/><circle cx="1329.0" cy="716.8" r="1.3"/><circle cx="1329.0" cy="758.0" r="1.3"/><circle cx="1329.0" cy="794.1" r="1.3"/><circle cx="1329.0" cy="829.2" r="1.3"/><circle cx="1329.0" cy="870.4" r="1.3"/><circle cx="1329.0" cy="906.5" r="1.3"/><circle cx="1329.0" cy="941.6" r="1.3"/><circle cx="1329.0" cy="982.8" r="1.3"/><circle cx="1370.2" cy="83.4" r="1.3"/><circle cx="1370.2" cy="119.5" r="1.3"/><circle cx="1370.2" cy="154.6" r="1.3"/><circle cx="1370.2" cy="195.8" r="1.3"/><circle cx="1370.2" cy="231.9" r="1.3"/><circle cx="1370.2" cy="267.0" r="1.3"/><circle cx="1370.2" cy="308.3" r="1.3"/><circle cx="1370.2" cy="344.4" r="1.3"/><circle cx="1370.2" cy="379.5" r="1.3"/><circle cx="1370.2" cy="420.7" r="1.3"/><circle cx="1370.2" cy="456.8" r="1.3"/><circle cx="1370.2" cy="491.9" r="1.3"/><circle cx="1370.2" cy="533.1" r="1.3"/><circle cx="1370.2" cy="569.2" r="1.3"/><circle cx="1370.2" cy="604.3" r="1.3"/><circle cx="1370.2" cy="645.6" r="1.3"/><circle cx="1370.2" cy="681.7" r="1.3"/><circle cx="1370.2" cy="716.8" r="1.3"/><circle cx="1370.2" cy="758.0" r="1.3"/><circle cx="1370.2" cy="794.1" r="1.3"/><circle cx="1370.2" cy="829.2" r="1.3"/><circle cx="1370.2" cy="870.4" r="1.3"/><circle cx="1370.2" cy="906.5" r="1.3"/><circle cx="1370.2" cy="941.6" r="1.3"/><circle cx="1370.2" cy="982.8" r="1.3"/><circle cx="1406.4" cy="83.4" r="1.3"/><circle cx="1406.4" cy="154.6" r="1.3"/><circle cx="1406.4" cy="195.8" r="1.3"/><circle cx="1406.4" cy="267.0" r="1.3"/><circle cx="1406.4" cy="308.3" r="1.3"/><circle cx="1406.4" cy="379.5" r="1.3"/><circle cx="1406.4" cy="420.7" r="1.3"/><circle cx="1406.4" cy="491.9" r="1.3"/><circle cx="1406.4" cy="533.1" r="1.3"/><circle cx="1406.4" cy="604.3" r="1.3"/><circle cx="1406.4" cy="645.6" r="1.3"/><circle cx="1406.4" cy="716.8" r="1.3"/><circle cx="1406.4" cy="758.0" r="1.3"/><circle cx="1406.4" cy="829.2" r="1.3"/><circle cx="1406.4" cy="870.4" r="1.3"/><circle cx="1406.4" cy="941.6" r="1.3"/><circle cx="1406.4" cy="982.8" r="1.3"/></g><g fill="#4a4a4a"><circle cx="56.4" cy="119.5" r="3"/><circle cx="56.4" cy="231.9" r="3"/><circle cx="56.4" cy="344.4" r="3"/><circle cx="56.4" cy="456.8" r="3"/><circle cx="56.4" cy="569.2" r="3"/><circle cx="56.4" cy="681.7" r="3"/><circle cx="56.4" cy="794.1" r="3"/><circle cx="56.4" cy="906.5" r="3"/><circle cx="168.9" cy="119.5" r="3"/><circle cx="168.9" cy="231.9" r="3"/><circle cx="168.9" cy="344.4" r="3"/><circle cx="168.9" cy="456.8" r="3"/><circle cx="168.9" cy="569.2" r="3"/><circle cx="168.9" cy="681.7" r="3"/><circle cx="168.9" cy="794.1" r="3"/><circle cx="168.9" cy="906.5" r="3"/><circle cx="281.4" cy="119.5" r="3"/><circle cx="281.4" cy="231.9" r="3"/><circle cx="281.4" cy="344.4" r="3"/><circle cx="281.4" cy="456.8" r="3"/><circle cx="281.4" cy="569.2" r="3"/><circle cx="281.4" cy="681.7" r="3"/><circle cx="281.4" cy="794.1" r="3"/><circle cx="281.4" cy="906.5" r="3"/><circle cx="393.9" cy="119.5" r="3"/><circle cx="393.9" cy="231.9" r="3"/><circle cx="393.9" cy="344.4" r="3"/><circle cx="393.9" cy="456.8" r="3"/><circle cx="393.9" cy="569.2" r="3"/><circle cx="393.9" cy="681.7" r="3"/><circle cx="393.9" cy="794.1" r="3"/><circle cx="393.9" cy="906.5" r="3"/><circle cx="506.4" cy="119.5" r="3"/><circle cx="506.4" cy="231.9" r="3"/><circle cx="506.4" cy="344.4" r="3"/><circle cx="506.4" cy="456.8" r="3"/><circle cx="506.4" cy="569.2" r="3"/><circle cx="506.4" cy="681.7" r="3"/><circle cx="506.4" cy="794.1" r="3"/><circle cx="506.4" cy="906.5" r="3"/><circle cx="618.9" cy="119.5" r="3"/><circle cx="618.9" cy="231.9" r="3"/><circle cx="618.9" cy="344.4" r="3"/><circle cx="618.9" cy="456.8" r="3"/><circle cx="618.9" cy="569.2" r="3"/><circle cx="618.9" cy="681.7" r="3"/><circle cx="618.9" cy="794.1" r="3"/><circle cx="618.9" cy="906.5" r="3"/><circle cx="731.4" cy="119.5" r="3"/><circle cx="731.4" cy="231.9" r="3"/><circle cx="731.4" cy="344.4" r="3"/><circle cx="731.4" cy="456.8" r="3"/><circle cx="731.4" cy="569.2" r="3"/><circle cx="731.4" cy="681.7" r="3"/><circle cx="731.4" cy="794.1" r="3"/><circle cx="731.4" cy="906.5" r="3"/><circle cx="843.9" cy="119.5" r="3"/><circle cx="843.9" cy="231.9" r="3"/><circle cx="843.9" cy="344.4" r="3"/><circle cx="843.9" cy="456.8" r="3"/><circle cx="843.9" cy="569.2" r="3"/><circle cx="843.9" cy="681.7" r="3"/><circle cx="843.9" cy="794.1" r="3"/><circle cx="843.9" cy="906.5" r="3"/><circle cx="956.4" cy="119.5" r="3"/><circle cx="956.4" cy="231.9" r="3"/><circle cx="956.4" cy="344.4" r="3"/><circle cx="956.4" cy="456.8" r="3"/><circle cx="956.4" cy="569.2" r="3"/><circle cx="956.4" cy="681.7" r="3"/><circle cx="956.4" cy="794.1" r="3"/><circle cx="956.4" cy="906.5" r="3"/><circle cx="1068.9" cy="119.5" r="3"/><circle cx="1068.9" cy="231.9" r="3"/><circle cx="1068.9" cy="344.4" r="3"/><circle cx="1068.9" cy="456.8" r="3"/><circle cx="1068.9" cy="569.2" r="3"/><circle cx="1068.9" cy="681.7" r="3"/><circle cx="1068.9" cy="794.1" r="3"/><circle cx="1068.9" cy="906.5" r="3"/><circle cx="1181.4" cy="119.5" r="3"/><circle cx="1181.4" cy="231.9" r="3"/><circle cx="1181.4" cy="344.4" r="3"/><circle cx="1181.4" cy="456.8" r="3"/><circle cx="1181.4" cy="569.2" r="3"/><circle cx="1181.4" cy="681.7" r="3"/><circle cx="1181.4" cy="794.1" r="3"/><circle cx="1181.4" cy="906.5" r="3"/><circle cx="1293.9" cy="119.5" r="3"/><circle cx="1293.9" cy="231.9" r="3"/><circle cx="1293.9" cy="344.4" r="3"/><circle cx="1293.9" cy="456.8" r="3"/><circle cx="1293.9" cy="569.2" r="3"/><circle cx="1293.9" cy="681.7" r="3"/><circle cx="1293.9" cy="794.1" r="3"/><circle cx="1293.9" cy="906.5" r="3"/><circle cx="1406.4" cy="119.5" r="3"/><circle cx="1406.4" cy="231.9" r="3"/><circle cx="1406.4" cy="344.4" r="3"/><circle cx="1406.4" cy="456.8" r="3"/><circle cx="1406.4" cy="569.2" r="3"/><circle cx="1406.4" cy="681.7" r="3"/><circle cx="1406.4" cy="794.1" r="3"/><circle cx="1406.4" cy="906.5" r="3"/></g>
<g fill="none" stroke="#ababab" stroke-width="1.35"><path d="M206,236 V386"/><path d="M248,442 V456.7 Q248,466.7 258,466.7 H310"/><path d="M380,450 V322"/><path d="M207,442 V644"/><path d="M268,676.3 H322 Q336,676.3 336,690.3 V847"/><path d="M531,289 H745"/><path d="M502,272.5 V228 Q502,213 517,213 H1318.7 Q1333.7,213 1333.7,228 V800.5 Q1333.7,807.5 1326.7,807.5 H1322"/><path d="M883,289 H1106"/><path d="M1176,309 V400 Q1176,413.8 1162,413.8 H914"/><path d="M764.3,413.8 H488 Q476,413.8 476,425.8 V505"/><path d="M791,432 V480"/><path d="M695,506 V606"/><path d="M879,432 V515"/><path d="M1000,527.5 H1058"/><path d="M805.6,633 H1135 Q1149.5,633 1149.5,618.5 V560"/><path d="M1232.8,527.5 H1240 Q1255,527.5 1255,542.5 V679 Q1255,693.75 1240,693.75 H824 Q817,693.75 817,700.75 V697"/><path d="M476.5,556 V716"/><path d="M545,728.7 H707"/><path d="M1192.8,807.5 H866 Q852.5,807.5 852.5,794 V735.75 Q852.5,728.75 845.5,728.75 H847"/><path d="M774,747.4 V871.9 Q774,885.9 760,885.9 H365"/></g><g fill="#fff"><circle cx="204.3" cy="236" r="4"/><circle cx="206.7" cy="441.7" r="4"/><circle cx="246.3" cy="441.7" r="4"/><circle cx="500.1" cy="272.5" r="4"/><circle cx="531" cy="292.2" r="4"/><circle cx="883" cy="289" r="4"/><circle cx="1175.5" cy="309.4" r="4"/><circle cx="764.3" cy="412" r="4"/><circle cx="789" cy="431.8" r="4"/><circle cx="880.5" cy="431.8" r="4"/><circle cx="476.5" cy="555.6" r="4"/><circle cx="805.6" cy="636.2" r="4"/><circle cx="1232.8" cy="530.2" r="4"/><circle cx="267.8" cy="673" r="4"/><circle cx="776.6" cy="747.4" r="4"/><circle cx="1192.8" cy="803.1" r="4"/></g><polygon points="206.3,396.3 200.10000000000002,384.3 212.5,384.3" fill="#c9c9c9"/><polygon points="379.8,312.5 373.6,324.5 386.0,324.5" fill="#c9c9c9"/><polygon points="207,654 200.8,642 213.2,642" fill="#c9c9c9"/><polygon points="336,857 329.8,845 342.2,845" fill="#c9c9c9"/><polygon points="755.7,289 743.7,282.8 743.7,295.2" fill="#c9c9c9"/><polygon points="1314,807.5 1326,801.3 1326,813.7" fill="#c9c9c9"/><polygon points="1116.5,289 1104.5,282.8 1104.5,295.2" fill="#c9c9c9"/><polygon points="904,413.8 916,407.6 916,420.0" fill="#c9c9c9"/><polygon points="476.3,515 470.1,503 482.5,503" fill="#c9c9c9"/><polygon points="695,616.3 688.8,604.3 701.2,604.3" fill="#c9c9c9"/><polygon points="1068.3,527.5 1056.3,521.3 1056.3,533.7" fill="#c9c9c9"/><polygon points="1149.6,550.5 1143.3999999999999,562.5 1155.8,562.5" fill="#c9c9c9"/><polygon points="817,708.5 810.8,696.5 823.2,696.5" fill="#c9c9c9"/><polygon points="717.2,728.7 705.2,722.5 705.2,734.9000000000001" fill="#c9c9c9"/><polygon points="837,728.75 849,722.55 849,734.95" fill="#c9c9c9"/><polygon points="355.2,885.9 367.2,879.6999999999999 367.2,892.1" fill="#c9c9c9"/><rect x="144.95" y="195.75" width="118.6" height="39.5" fill="#5d5d5d" stroke="#7e7e7e" stroke-width="1.5"/><text x="204.2" y="220.1" text-anchor="middle" class="nt">Start</text><rect x="147.75" y="401.95" width="118.5" height="39.0" fill="#5d5d5d" stroke="#7e7e7e" stroke-width="1.5"/><circle cx="166.8" cy="420.8" r="8.6" fill="none" stroke="#5b9df2" stroke-width="1.6"/><circle cx="166.8" cy="420.8" r="5.9" fill="#4f5b68"/><path d="M166.8,420.8 V414.90 A5.9,5.9 0 0 1 171.86,423.84 Z" fill="#5fa0f7"/><text x="199.2" y="426.1" class="nt">Open</text><rect x="351.25" y="273.25" width="178.3" height="39.2" fill="#5d5d5d" stroke="#7e7e7e" stroke-width="1.5"/><circle cx="370.6" cy="292.2" r="8.6" fill="none" stroke="#5b9df2" stroke-width="1.6"/><circle cx="370.6" cy="292.2" r="5.9" fill="#4f5b68"/><path d="M370.6,292.2 V286.30 A5.9,5.9 0 0 1 375.66,295.24 Z" fill="#5fa0f7"/><text x="392.5" y="297.5" class="nt">Approval pending</text><rect x="754.85" y="269.55" width="126.1" height="39.1" fill="#5d5d5d" stroke="#7e7e7e" stroke-width="1.5"/><circle cx="774.1" cy="288.9" r="8.6" fill="none" stroke="#5b9df2" stroke-width="1.6"/><circle cx="774.1" cy="288.9" r="5.9" fill="#4f5b68"/><path d="M774.1,288.9 V283.00 A5.9,5.9 0 0 1 779.16,291.94 Z" fill="#5fa0f7"/><text x="796" y="293.7" class="nt">Approved</text><rect x="1116.45" y="269.55" width="118.5" height="39.1" fill="#5d5d5d" stroke="#7e7e7e" stroke-width="1.5"/><circle cx="1135.5" cy="289" r="8.6" fill="none" stroke="#5b9df2" stroke-width="1.6"/><circle cx="1135.5" cy="289" r="5.9" fill="#4f5b68"/><path d="M1135.5,289 V283.10 A5.9,5.9 0 0 1 1140.56,292.04 Z" fill="#5fa0f7"/><text x="1154.4" y="293.7" class="nt">Assigned</text><rect x="766.65" y="391.85" width="136.3" height="39.2" fill="#5d5d5d" stroke="#7e7e7e" stroke-width="1.5"/><circle cx="785.3" cy="411.2" r="8.6" fill="none" stroke="#5b9df2" stroke-width="1.6"/><circle cx="785.3" cy="411.2" r="5.9" fill="#4f5b68"/><path d="M785.3,411.2 V405.30 A5.9,5.9 0 0 1 790.36,414.24 Z" fill="#5fa0f7"/><text x="807.4" y="416.1" class="nt">In progress</text><rect x="417.55" y="515.65" width="118.4" height="39.2" fill="#5d5d5d" stroke="#7e7e7e" stroke-width="1.5"/><circle cx="436.6" cy="534.4" r="8.6" fill="none" stroke="#5b9df2" stroke-width="1.6"/><circle cx="436.6" cy="534.4" r="5.9" fill="#4f5b68"/><path d="M436.6,534.4 V528.50 A5.9,5.9 0 0 1 441.66,537.44 Z" fill="#5fa0f7"/><text x="461.4" y="539.9" class="nt">Reopen</text><rect x="1069.05" y="510.35" width="161.3" height="39.4" fill="#5d5d5d" stroke="#7e7e7e" stroke-width="1.5"/><circle cx="1087.9" cy="529.7" r="8.6" fill="none" stroke="#5b9df2" stroke-width="1.6"/><circle cx="1087.9" cy="529.7" r="5.9" fill="#4f5b68"/><path d="M1087.9,529.7 V523.80 A5.9,5.9 0 0 1 1092.96,532.74 Z" fill="#5fa0f7"/><text x="1109.8" y="534.6" class="nt">Asset provided</text><rect x="677.55" y="617.05" width="126.6" height="38.7" fill="#5d5d5d" stroke="#7e7e7e" stroke-width="1.5"/><circle cx="696.8" cy="636" r="8.6" fill="none" stroke="#5b9df2" stroke-width="1.6"/><circle cx="696.8" cy="636" r="5.9" fill="#4f5b68"/><path d="M696.8,636 V630.10 A5.9,5.9 0 0 1 701.86,639.04 Z" fill="#5fa0f7"/><text x="718.2" y="641.0" class="nt">PO raised</text><rect x="148.15" y="654.75" width="117.8" height="38.5" fill="#5d5d5d" stroke="#7e7e7e" stroke-width="1.5"/><circle cx="167.1" cy="673.5" r="8.5" fill="#fff" stroke="#3cc14a" stroke-width="1.8"/><path d="M162.60,672.80 L165.90,675.70 L171.20,670.50" fill="none" stroke="#3cc14a" stroke-width="2.1" stroke-linejoin="miter"/><text x="185.6" y="678.6" class="nt">Canceled</text><rect x="717.95" y="707.75" width="118.2" height="38.9" fill="#5d5d5d" stroke="#7e7e7e" stroke-width="1.5"/><circle cx="736.9" cy="727.2" r="8.5" fill="#fff" stroke="#3cc14a" stroke-width="1.8"/><path d="M732.40,726.50 L735.70,729.40 L741.00,724.20" fill="none" stroke="#3cc14a" stroke-width="2.1" stroke-linejoin="miter"/><text x="763.5" y="731.8" class="nt">Closed</text><rect x="1195.15" y="784.50" width="118.1" height="38.8" fill="#5d5d5d" stroke="#7e7e7e" stroke-width="1.5"/><circle cx="1214" cy="803.1" r="8.6" fill="none" stroke="#5b9df2" stroke-width="1.6"/><circle cx="1214" cy="803.1" r="5.9" fill="#4f5b68"/><path d="M1214,803.1 V797.20 A5.9,5.9 0 0 1 1219.06,806.14 Z" fill="#5fa0f7"/><text x="1235" y="808.5" class="nt">Rejected</text><rect x="237.05" y="863.35" width="117.4" height="38.1" fill="#5d5d5d" stroke="#7e7e7e" stroke-width="1.5"/><text x="295.8" y="887.0" text-anchor="middle" class="nt">End</text><polygon points="180,298.3 244.6,298.3 232,325.8 168.2,325.8" fill="#4bb882"/><text x="206.4" y="317.4" text-anchor="middle" class="lt">Start</text><polygon points="311.7,449.7 449.2,449.7 436.7,477.2 299.5,477.2" fill="#4bb882"/><text x="374.4" y="468.8" text-anchor="middle" class="lt">Initiate approval</text><polygon points="173.7,531.1 252.2,531.1 241.1,558.1 162.6,558.1" fill="#4bb882"/><text x="207.4" y="549.9" text-anchor="middle" class="lt">Cancel</text><polygon points="602,275.3 688.5,275.3 675.8,302.7 590,302.7" fill="#4bb882"/><text x="639.7" y="294.3" text-anchor="middle" class="lt">Approve</text><polygon points="924.7,275.3 1078,275.3 1066.4,302.7 913.3,302.7" fill="#4bb882"/><text x="995.8" y="294.3" text-anchor="middle" class="lt">Assign Technician</text><polygon points="1151.7,199.5 1241.6,199.5 1230.2,226.3 1140.9,226.3" fill="#4bb882"/><text x="1191.3" y="218.2" text-anchor="middle" class="lt">Rejected</text><polygon points="516.8,400.4 648,400.4 636.6,427.5 506,427.5" fill="#4bb882"/><text x="576.9" y="419.2" text-anchor="middle" class="lt">Reinitiate work</text><polygon points="1044.8,400.2 1152.3,400.2 1140.7,427.6 1032.6,427.6" fill="#4bb882"/><text x="1092.7" y="419.2" text-anchor="middle" class="lt">Begin Work</text><polygon points="637.8,479.2 806.9,479.2 795.4,506.6 626.5,506.6" fill="#4bb882"/><text x="716.9" y="498.2" text-anchor="middle" class="lt">Purchase New Asset</text><polygon points="853.8,514 1008.8,514 997.4,541.3 842.2,541.3" fill="#4bb882"/><text x="925.5" y="532.9" text-anchor="middle" class="lt">Use Existing Asset</text><polygon points="955.5,619.25 1079.5,619.25 1068.25,646.25 944.25,646.25" fill="#4bb882"/><text x="1011.9" y="638.0" text-anchor="middle" class="lt">Provide Asset</text><polygon points="1093.75,680.5 1163,680.5 1151.25,707.5 1082,707.5" fill="#4bb882"/><text x="1122.5" y="699.3" text-anchor="middle" class="lt">Close</text><polygon points="474.6,715 556.5,715 545.1,742.6 463.3,742.6" fill="#4bb882"/><text x="509.8" y="734.1" text-anchor="middle" class="lt">Reopen</text><polygon points="951.25,793.75 1025.6,793.75 1014.7,821.25 941.25,821.25" fill="#4bb882"/><text x="983.4" y="812.8" text-anchor="middle" class="lt">Reject</text>
</g>
</svg>
<div class="abs" style="left:25px;top:88px;width:37px;height:117px;border:1px solid #5a5a5a;border-radius:4px;background:#121212"></div>
<div class="abs" style="left:26px;top:126px;width:35px;height:1px;background:#5a5a5a"></div>
<div class="abs" style="left:26px;top:165px;width:35px;height:1px;background:#5a5a5a"></div>
<svg class="abs" style="left:25px;top:88px" width="37" height="117" viewBox="0 0 37 117">
 <path d="M18.7,13.5 V25.5 M12.7,19.5 H24.7" stroke="#fff" stroke-width="2.4"/>
 <circle cx="18.7" cy="57.5" r="6" fill="none" stroke="#eee" stroke-width="1.3"/>
 <circle cx="18.7" cy="57.5" r="2.4" fill="none" stroke="#eee" stroke-width="1.2"/>
 <path d="M18.7,48 V52 M18.7,63 V67 M9,57.5 H13 M24.5,57.5 H28.5" stroke="#eee" stroke-width="1.7"/>
 <path d="M13,97 H24.5" stroke="#fff" stroke-width="2.6"/>
</svg>
<div class="abs" style="left:20px;top:219px;width:52px;height:33px;border:1px solid #5a5a5a;border-radius:4px;background:#121212"></div>
<div class="t" style="left:26px;top:226.5px;font-size:16px;color:#e8e8e8">100%</div>


<div id="panel" class="abs"></div>
<div id="below" class="abs"></div>
<div class="t" style="left:1450px;top:82.3px;font-size:17.3px;color:#6e8ff5">Details</div>
<div class="abs" style="left:1446px;top:121px;width:61px;height:3px;background:#6585f0"></div>
<div class="abs" style="left:1421px;top:124px;width:499px;height:1px;background:#424242"></div>
<div class="t" style="left:1447px;top:147.3px;font-size:24.4px;color:#e0e0e0">Request New Laptop</div>
<div class="t" style="left:1447px;top:198.8px;font-size:17.5px;color:#a9a9a9">Lifecycle configured for new laptops</div>
<div class="t" style="left:1446px;top:255.3px;font-size:17px;color:#dcdcdc;font-weight:400;letter-spacing:-0.05px;-webkit-text-stroke:0.3px #dcdcdc">Associated Templates:</div>
<div class="t" style="left:1446px;top:292.8px;font-size:15.6px;color:#a9a9a9">Select Templates</div>
<div class="abs" style="left:1421px;top:330px;width:499px;height:1px;background:#424242"></div>
<div class="t" style="left:1446px;top:356.8px;font-size:17.3px;color:#bdbdbd">Drag &amp; Drop Status</div>
<div class="abs" style="left:1453px;top:402px;width:138px;height:38px;border:1px solid #5c5c5c;background:#2d2d2d"></div>
<div class="abs" style="left:1453px;top:452px;width:141px;height:38px;border:1px solid #5c5c5c;background:#2d2d2d"></div>
<svg class="abs" style="left:1460px;top:405px" width="60" height="90" viewBox="1460 405 60 90">
 <g fill="#9a9a9a">
 <rect x="1467" y="415" width="2.6" height="2.6"/><rect x="1472.2" y="415" width="2.6" height="2.6"/>
 <rect x="1467" y="421" width="2.6" height="2.6"/><rect x="1472.2" y="421" width="2.6" height="2.6"/>
 <rect x="1467" y="427.2" width="2.6" height="2.6"/><rect x="1472.2" y="427.2" width="2.6" height="2.6"/>
 <rect x="1467" y="465" width="2.6" height="2.6"/><rect x="1472.2" y="465" width="2.6" height="2.6"/>
 <rect x="1467" y="471" width="2.6" height="2.6"/><rect x="1472.2" y="471" width="2.6" height="2.6"/>
 <rect x="1467" y="477.2" width="2.6" height="2.6"/><rect x="1472.2" y="477.2" width="2.6" height="2.6"/>
 </g>
 <rect x="1498.6" y="411.3" width="3.2" height="1.8" fill="#4a5560"/><path d="M1505.4,415.6 l1.6,-1.6" stroke="#4a5560" stroke-width="1.2"/>
 <circle cx="1500.2" cy="421.9" r="7.2" fill="#fff" stroke="#3d4650" stroke-width="1"/>
 <rect x="1498.3" y="420" width="3.9" height="3.9" fill="#e0433f"/>
 <circle cx="1500.2" cy="470.4" r="8.3" fill="#fff" stroke="#3cc14a" stroke-width="1.9"/><path d="M1495.70,469.70 L1499.00,472.60 L1504.30,467.40" fill="none" stroke="#3cc14a" stroke-width="2.1" stroke-linejoin="miter"/>
</svg>
<div class="t" style="left:1516px;top:412.5px;font-size:15px;color:#e4e4e4">On Hold</div>
<div class="t" style="left:1516px;top:462.5px;font-size:14.3px;color:#e4e4e4">Resolved</div>


<div id="bottom" class="abs"></div>
<div class="t" style="left:21px;top:1033px;font-size:17px;color:#dedede;font-weight:700;letter-spacing:-0.5px">Legend</div>
<div class="t" style="left:89px;top:1033px;font-size:17px;color:#dedede;font-weight:700">:</div>
<div class="abs" style="left:99px;top:1025px;width:374px;height:37px;border:1px solid #404042;border-radius:3px"></div>
<div class="abs" style="left:223px;top:1032px;width:1px;height:24px;background:#404042"></div>
<div class="abs" style="left:347px;top:1032px;width:1px;height:24px;background:#404042"></div>
<svg class="abs" style="left:100px;top:1026px" width="280" height="36" viewBox="100 1026 280 36">
 <circle cx="119.3" cy="1043.3" r="8.7" fill="none" stroke="#5b9df2" stroke-width="1.6"/>
 <circle cx="119.3" cy="1043.3" r="6" fill="#33404f"/>
 <path d="M119.3,1043.3 V1037.3 A6,6 0 0 1 123.6,1047.5 Z" fill="#5fa0f7"/>
 <rect x="240.4" y="1034" width="3.2" height="1.8" fill="#4a5560"/><path d="M247.2,1038.2 l1.6,-1.6" stroke="#4a5560" stroke-width="1.2"/>
 <circle cx="242" cy="1044.5" r="7" fill="#fff" stroke="#3d4650" stroke-width="1"/>
 <rect x="240.1" y="1042.6" width="3.9" height="3.9" fill="#e0433f"/>
 <circle cx="367" cy="1043.3" r="8.5" fill="#fff" stroke="#3cc14a" stroke-width="1.9"/><path d="M362.50,1042.60 L365.80,1045.50 L371.10,1040.30" fill="none" stroke="#3cc14a" stroke-width="2.1" stroke-linejoin="miter"/>
</svg>
<div class="t" style="left:135px;top:1036.2px;font-size:15.7px;color:#dedede">In progress</div>
<div class="t" style="left:259px;top:1036.2px;font-size:16px;color:#dedede">Stop Timer</div>
<div class="t" style="left:383px;top:1036.2px;font-size:16px;color:#dedede">Completed</div>
<div class="btn" style="left:1045px;width:94px">Publish</div>
<div class="btn" style="left:1154px;width:136px">Save as Draft</div>
<div class="btn" style="left:1304px;width:92px;top:1024px;height:37.5px;background:#111111;border:2px solid #5e5e5e;color:#d9d9d9;line-height:30.5px">Cancel</div>

</body></html>
